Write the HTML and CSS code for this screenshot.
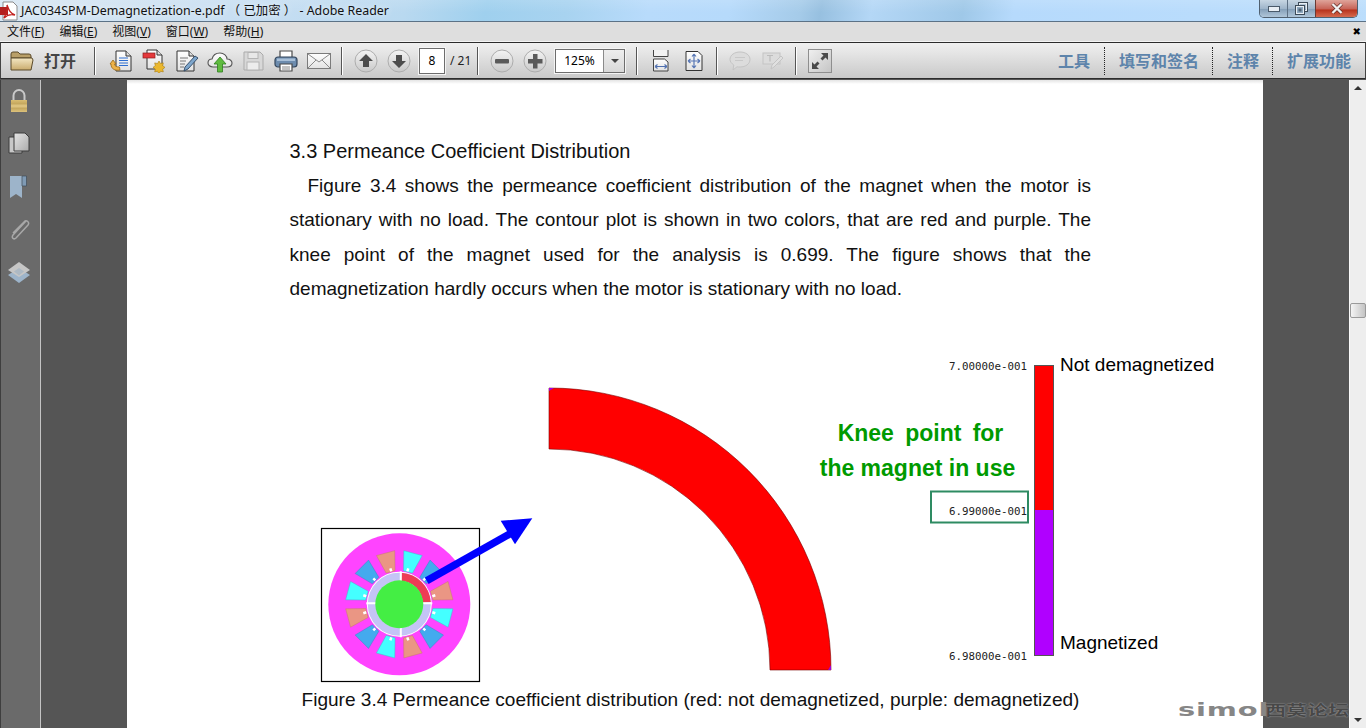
FILE: index.html
```html
<!DOCTYPE html>
<html lang="zh">
<head>
<meta charset="utf-8">
<title>Adobe Reader</title>
<link rel="stylesheet" href="styles.css">
</head>
<body>
<svg class="defs" width="0" height="0" aria-hidden="true">
  <defs>
    <linearGradient id="gBtn" x1="0" y1="0" x2="0" y2="1"><stop offset="0" stop-color="#f4f4f4"/><stop offset="1" stop-color="#c9c9c9"/></linearGradient>
    <linearGradient id="gDoc" x1="0" y1="0" x2="0" y2="1"><stop offset="0" stop-color="#ffffff"/><stop offset="1" stop-color="#e2e2e2"/></linearGradient>
    <linearGradient id="gFolder" x1="0" y1="0" x2="0" y2="1"><stop offset="0" stop-color="#f3e7c4"/><stop offset="1" stop-color="#c9ab6d"/></linearGradient>
    <linearGradient id="gBrass" x1="0" y1="0" x2="0" y2="1"><stop offset="0" stop-color="#d9bd72"/><stop offset=".3" stop-color="#c5a85f"/><stop offset=".5" stop-color="#e2c987"/><stop offset=".7" stop-color="#c5a85f"/><stop offset="1" stop-color="#dcc27c"/></linearGradient>
    <linearGradient id="gPage" x1="0" y1="0" x2="1" y2="1"><stop offset="0" stop-color="#e6e6e6"/><stop offset="1" stop-color="#ababab"/></linearGradient>
    <linearGradient id="gFull" x1="0" y1="0" x2="1" y2="1"><stop offset="0" stop-color="#f0f0f0"/><stop offset="1" stop-color="#c4c4c4"/></linearGradient>
  </defs>
</svg>

<header class="titlebar">
  <svg class="pdf-icon" width="20" height="20" viewBox="0 0 20 20">
    <path d="M3 1h10l4 4v14H3z" fill="#fff" stroke="#8a8a8a"/>
    <path d="M0 6h8v8H0z" fill="#b3201f"/>
    <path d="M7 4c2 5 3 8 8 10-4-1-8 0-11 3 2-4 4-8 3-13z" fill="none" stroke="#c2221f" stroke-width="1.4"/>
  </svg>
  <span class="title-text">JAC034SPM-Demagnetization-e.pdf （ 已加密 ） - Adobe Reader</span>
  <div class="winctrls">
    <span class="wc wc-min"><svg width="12" height="6" viewBox="0 0 12 6"><rect x=".5" y=".5" width="11" height="5" fill="#e8eef4" stroke="#4a5a6a"/></svg></span>
    <span class="wc wc-max"><svg width="13" height="13" viewBox="0 0 13 13"><rect x="3.5" y=".5" width="9" height="9" fill="none" stroke="#3c4a58"/><rect x="4.5" y="1.5" width="7" height="7" fill="none" stroke="#e8eef4"/><rect x=".5" y="3.5" width="9" height="9" fill="#8ea8bf" stroke="#3c4a58"/><rect x="1.5" y="4.5" width="7" height="7" fill="none" stroke="#e8eef4"/><rect x="3.5" y="6.5" width="3" height="3" fill="#4e6073"/></svg></span>
    <span class="wc wc-close"><svg width="12" height="11" viewBox="0 0 12 11"><path d="M1.5 1l9 9M10.500 1l-9 9" stroke="#5e2a22" stroke-width="3.600"/><path d="M1.500 1l9 9M10.500 1l-9 9" stroke="#f2f2f2" stroke-width="2.400"/></svg></span>
  </div>
</header>

<nav class="menubar">
  <span class="menu-item">文件(<u>F</u>)</span>
  <span class="menu-item">编辑(<u>E</u>)</span>
  <span class="menu-item">视图(<u>V</u>)</span>
  <span class="menu-item">窗口(<u>W</u>)</span>
  <span class="menu-item">帮助(<u>H</u>)</span>
  <span class="menu-close">✖</span>
</nav>

<div class="toolbar">
  <span class="cell cell-open">
    <svg width="24" height="22" viewBox="0 0 24 22"><path d="M1 4q0-2 2-2h5l2 2h9q2 0 2 2v2H1z" fill="#b99f68" stroke="#5b4a2a"/><path d="M1 20V8h21l1 2-2 10z" fill="url(#gFolder)" stroke="#5b4a2a"/></svg>
  </span>
  <span class="open-label">打开</span>
  <span class="sep"></span>
  <div class="cells cells-file">
    <span class="cell"><svg width="24" height="24" viewBox="0 0 24 24"><path d="M7 2h10l5 5v15H7z" fill="url(#gDoc)" stroke="#333"/><path d="M17 2v5h5" fill="#ddd" stroke="#333"/><path d="M10 9h9M10 11.500h9M10 14h9M10 16.500h9" stroke="#2f6fd0" stroke-width="1.200"/><path d="M11 21c-5 1-9-1-9-6l-1 0 3-4 3 4-1.500 0c0 2 2 3 5 3z" fill="#edb247" stroke="#9a6a16" stroke-width=".8"/></svg></span>
    <span class="cell"><svg width="24" height="24" viewBox="0 0 24 24"><path d="M5 1h10l5 5v14H5z" fill="url(#gDoc)" stroke="#333"/><path d="M15 1v5h5" fill="#ddd" stroke="#333"/><rect x="1" y="4" width="12" height="5" fill="#e4393c" stroke="#8c1c1e" stroke-width=".7"/><path d="M17 12l1.500 2.500 2.800-.6-.6 2.800 2.300 1.700-2.300 1.700.6 2.800-2.800-.6L17 24.800l-1.500-2.500-2.800.6.6-2.800-2.300-1.700 2.300-1.700-.6-2.800 2.800.6z" fill="#eab72e" stroke="#a87c12" stroke-width=".6"/></svg></span>
    <span class="cell"><svg width="24" height="24" viewBox="0 0 24 24"><path d="M2 2h12l5 5v15H2z" fill="url(#gDoc)" stroke="#333"/><path d="M14 2v5h5" fill="#ddd" stroke="#333"/><path d="M5 9h8M5 12h6M5 15h5M5 18h4" stroke="#777"/><path d="M10 18l-1 4 4-2 10-11-3-2z" fill="#7ea6cc" stroke="#2c4663" stroke-width=".9"/></svg></span>
    <span class="cell"><svg width="26" height="24" viewBox="0 0 26 24"><path d="M6 18c-3 0-5-2-5-4 0-3 2-4 4-4 1-4 4-6 8-6 4 0 7 3 7 6 3 0 5 2 5 4 0 3-2 4-5 4z" fill="url(#gDoc)" stroke="#555" stroke-width="1.100"/><path d="M13 8l6 7h-3.500v8h-5v-8H7z" fill="#5fbb3f" stroke="#2f7d1e" stroke-width=".8"/></svg></span>
    <span class="cell"><svg width="22" height="22" viewBox="0 0 22 22"><path d="M2 2h16l3 3v15H2z" fill="#d8d8d8" stroke="#ababab"/><rect x="6" y="2.500" width="10" height="6" fill="#e8e8e8" stroke="#b4b4b4"/><rect x="5" y="12" width="12" height="8" fill="#ececec" stroke="#b4b4b4"/></svg></span>
    <span class="cell"><svg width="24" height="24" viewBox="0 0 24 24"><path d="M6 9V2h12v7" fill="#fff" stroke="#4a4a4a" stroke-width="1.200"/><rect x="1" y="8" width="22" height="10" rx="3" fill="#6d8cae" stroke="#34465c" stroke-width="1.200"/><rect x="3" y="9.500" width="18" height="2.500" fill="#a9c0d8"/><path d="M6 15h12v7H6z" fill="#fff" stroke="#4a4a4a" stroke-width="1.200"/><path d="M8 18h8M8 20h8" stroke="#888"/></svg></span>
    <span class="cell"><svg width="24" height="18" viewBox="0 0 24 18"><rect x=".5" y="1.500" width="23" height="15" fill="url(#gDoc)" stroke="#7b7b7b"/><path d="M1 2l11 8 11-8M1 16l8-8M23 16l-8-8" fill="none" stroke="#8a8a8a"/></svg></span>
  </div>
  <span class="sep"></span>
  <div class="cells">
    <span class="cell"><svg width="24" height="24" viewBox="0 0 24 24"><circle cx="12" cy="12" r="11" fill="url(#gBtn)" stroke="#adadad"/><path d="M12 5l7 7h-4v6H9v-6H5z" fill="#4d4d4d"/></svg></span>
    <span class="cell"><svg width="24" height="24" viewBox="0 0 24 24"><circle cx="12" cy="12" r="11" fill="url(#gBtn)" stroke="#adadad"/><path d="M12 19l7-7h-4V6H9v6H5z" fill="#4d4d4d"/></svg></span>
  </div>
  <span class="page-input">8</span>
  <span class="page-total">/ 21</span>
  <span class="sep"></span>
  <div class="cells">
    <span class="cell"><svg width="24" height="24" viewBox="0 0 24 24"><circle cx="12" cy="12" r="11" fill="url(#gBtn)" stroke="#adadad"/><rect x="5" y="10" width="14" height="4.500" rx="1" fill="#5a5a5a"/></svg></span>
    <span class="cell"><svg width="24" height="24" viewBox="0 0 24 24"><circle cx="12" cy="12" r="11" fill="url(#gBtn)" stroke="#adadad"/><path d="M10 5h4.500v5H19.500v4.500h-5v5H10v-5H5V10h5z" fill="#5a5a5a"/></svg></span>
  </div>
  <div class="zoom-box">
    <span class="zoom-value">125%</span>
    <span class="zoom-drop"></span>
  </div>
  <span class="sep"></span>
  <div class="cells">
    <span class="cell"><svg width="18" height="22" viewBox="0 0 18 22"><path d="M1.500 0v6.500h14.500V0" fill="#f2f2f2" stroke="#444"/><path d="M1.500 9h11l3.500 3v9H1.500z" fill="url(#gDoc)" stroke="#444"/><path d="M3 16.500h12M3 16.500l2.500-2M3 16.500l2.500 2M15 16.500l-2.500-2M15 16.500l-2.500 2" stroke="#5070b0" fill="none" stroke-width="1.100"/></svg></span>
    <span class="cell"><svg width="18" height="20" viewBox="0 0 18 20"><path d="M1 .5h12l4 4v15H1z" fill="url(#gDoc)" stroke="#333"/><path d="M9 3v14M3 10h12M9 3l-2 2.500M9 3l2 2.500M9 17l-2-2.500M9 17l2-2.500M3 10l2.500-2M3 10l2.500 2M15 10l-2.500-2M15 10l-2.500 2" stroke="#5877b5" fill="none" stroke-width="1.200"/></svg></span>
  </div>
  <span class="sep"></span>
  <div class="cells cells-comment">
    <span class="cell"><svg width="22" height="20" viewBox="0 0 22 20"><path d="M11 1c5.500 0 10 3 10 7.500S16.500 16 11 16c-1 0-2 0-3-.2L4 19l.8-5C2.500 12.500 1 10.500 1 8.500 1 4 5.500 1 11 1z" fill="#dcdcdc" stroke="#c4c4c4"/><path d="M6 6.500h10M6 9.500h8" stroke="#c8c8c8"/></svg></span>
    <span class="cell"><svg width="22" height="20" viewBox="0 0 22 20"><rect x="1" y="2" width="17" height="11" fill="#dcdcdc" stroke="#c4c4c4"/><path d="M5 4.500h6M8 4.500v6" stroke="#bcbcbc" stroke-width="1.200"/><path d="M9 18l1-4 9-9 2 2-9 9z" fill="#e0e0e0" stroke="#c4c4c4"/></svg></span>
  </div>
  <span class="sep"></span>
  <span class="cell"><svg width="24" height="24" viewBox="0 0 24 24"><rect x=".5" y=".5" width="23" height="23" fill="url(#gFull)" stroke="#8e8e8e"/><path d="M13 4h7v7l-2.500-2.500-3 3-2-2 3-3zM11 20H4v-7l2.500 2.500 3-3 2 2-3 3z" fill="#4a4a4a"/></svg></span>
  <div class="panes">
    <span class="pane pane-first">工具</span>
    <span class="pane pane-div">填写和签名</span>
    <span class="pane pane-div">注释</span>
    <span class="pane pane-div pane-last">扩展功能</span>
  </div>
</div>

<main class="workspace">
  <aside class="sidebar">
    <svg class="side-icon" width="20" height="24" viewBox="0 0 20 24"><path d="M4.500 11V6.500a5.500 5.500 0 0 1 11 0V11" fill="none" stroke="#c9c9c9" stroke-width="2"/><rect x="2" y="11" width="16" height="12" fill="url(#gBrass)"/></svg>
    <svg class="side-icon" width="22" height="24" viewBox="0 0 22 24"><path d="M1 5h13v16H1z" fill="#c8c8c8" stroke="#3c3c3c"/><path d="M6 1h11l4 4v14H6z" fill="url(#gPage)" stroke="#3c3c3c"/></svg>
    <svg class="side-icon" width="20" height="24" viewBox="0 0 20 24"><path d="M1 1h12v22l-6-4-6 4z" fill="#9db4ca"/><path d="M13 1h4.500v10H13z" fill="#7f9ab4" stroke="#3f4c58" stroke-width=".7"/></svg>
    <svg class="side-icon" width="22" height="24" viewBox="0 0 22 24"><path d="M18 3L5 17c-2 3 1 5 3 3L20 7c2-3-2-6-4-3L5 15" fill="none" stroke="#a8a8a8" stroke-width="1.500"/></svg>
    <svg class="side-icon" width="24" height="24" viewBox="0 0 24 24"><path d="M1 14l11-7 11 7-11 8z" fill="#9db4ca"/><path d="M1 9l11-8 11 8-11 7z" fill="#c6c6c6"/><path d="M7 10.500l5-3.500 5 3.500-5 4z" fill="#adb9c4"/></svg>
  </aside>

  <div class="viewer">
    <article class="page">
      <h1 class="heading">3.3 Permeance Coefficient Distribution</h1>
      <p class="body-text">Figure 3.4 shows the permeance coefficient distribution of the magnet when the motor is stationary with no load. The contour plot is shown in two colors, that are red and purple. The knee point of the magnet used for the analysis is 0.699. The figure shows that the demagnetization hardly occurs when the motor is stationary with no load.</p>
      <figure class="figure">
        <svg class="plot" width="1136" height="382" viewBox="127 306 1136 382">
          <path d="M549 388A282 282 0 0 1 831 670H770A221 221 0 0 0 549 449z" fill="#ff0000" stroke="#7a0000" stroke-width=".6"/>
          <path d="M549 388h5l-5 3zM831 670v-5l-3 5z" fill="#a000e0"/>

          <rect x="321.500" y="528.500" width="158" height="153" fill="#fff" stroke="#000" stroke-width="1.200"/>
          <g transform="translate(399.300 604.300)">
            <circle r="71" fill="#ff44ff"/>
            <polygon class="slot-s" points="-9.500,-53 9.500,-53 4.600,-33.500 -4.600,-33.500" transform="rotate(-15)"/>
            <polygon class="slot-c" points="-9.500,-53 9.500,-53 4.600,-33.500 -4.600,-33.500" transform="rotate(15)"/>
            <polygon class="slot-b" points="-9.500,-53 9.500,-53 4.600,-33.500 -4.600,-33.500" transform="rotate(45)"/>
            <polygon class="slot-s" points="-9.500,-53 9.500,-53 4.600,-33.500 -4.600,-33.500" transform="rotate(75)"/>
            <polygon class="slot-c" points="-9.500,-53 9.500,-53 4.600,-33.500 -4.600,-33.500" transform="rotate(105)"/>
            <polygon class="slot-b" points="-9.500,-53 9.500,-53 4.600,-33.500 -4.600,-33.500" transform="rotate(135)"/>
            <polygon class="slot-s" points="-9.500,-53 9.500,-53 4.600,-33.500 -4.600,-33.500" transform="rotate(165)"/>
            <polygon class="slot-c" points="-9.500,-53 9.500,-53 4.600,-33.500 -4.600,-33.500" transform="rotate(195)"/>
            <polygon class="slot-b" points="-9.500,-53 9.500,-53 4.600,-33.500 -4.600,-33.500" transform="rotate(225)"/>
            <polygon class="slot-s" points="-9.500,-53 9.500,-53 4.600,-33.500 -4.600,-33.500" transform="rotate(255)"/>
            <polygon class="slot-c" points="-9.500,-53 9.500,-53 4.600,-33.500 -4.600,-33.500" transform="rotate(285)"/>
            <polygon class="slot-b" points="-9.500,-53 9.500,-53 4.600,-33.500 -4.600,-33.500" transform="rotate(315)"/>
            <circle r="32.500" fill="#fff"/>
            <circle r="27.500" fill="none" stroke="#c4c4f6" stroke-width="8"/>
            <path d="M2 -27.500A27.500 27.500 0 0 1 27.500 -2" fill="none" stroke="#ee3c55" stroke-width="8"/>
            <path d="M1.500-33v10M1.500 23v10M-33-1h10M23-1h10" stroke="#fff" stroke-width="2"/>
            <path d="M-8-33l-1-3M8-33l1-3M-33-8l-3-1M33-8l3-1M-33 8l-3 1M33 8l3 1M-8 33l-1 3M8 33l1 3M-24-24l-2-2M24-24l2-2M-24 24l-2 2M24 24l2 2" stroke="#fff" stroke-width="2.500"/>
            <circle r="24" fill="#44ee44"/>
          </g>

          <path d="M426.700 580.700L513 532" stroke="#0000ff" stroke-width="7.500"/>
          <polygon points="500.700,520.700 532.300,518.300 515,544.300" fill="#0000ff"/>

          <text class="scale-label" x="1027" y="370" text-anchor="end">7.00000e-001</text>
          <text class="scale-label" x="1027" y="515" text-anchor="end">6.99000e-001</text>
          <text class="scale-label" x="1027" y="660" text-anchor="end">6.98000e-001</text>
          <rect x="931" y="491.500" width="97" height="31" fill="none" stroke="#2e8b62" stroke-width="2"/>
          <rect x="1034.500" y="365.500" width="19" height="290" fill="#b000ff" stroke="#555"/>
          <rect x="1035" y="366" width="18" height="144" fill="#ff0000"/>
          <text class="legend" x="1060" y="371">Not demagnetized</text>
          <text class="legend" x="1060" y="649">Magnetized</text>
          <text class="knee knee-top" x="920.500" y="441" text-anchor="middle" xml:space="preserve">Knee  point  for</text>
          <text class="knee" x="917.500" y="476" text-anchor="middle">the magnet in use</text>
        </svg>
      </figure>
      <p class="caption">Figure 3.4 Permeance coefficient distribution (red: not demagnetized, purple: demagnetized)</p>
    </article>
  </div>

  <div class="scrollbar">
    <span class="arrow-up"></span>
    <span class="thumb"></span>
    <span class="arrow-down"></span>
  </div>

  <div class="watermark"><span class="wm-latin">simol</span><span class="wm-cjk">西莫论坛</span></div>
</main>
</body>
</html>
```

FILE: styles.css
```css
* { box-sizing: border-box; }
html, body { margin: 0; padding: 0; }
body {
  width: 1366px;
  height: 728px;
  overflow: hidden;
  display: flex;
  flex-direction: column;
  font-family: "Noto Sans", "Noto Sans CJK SC", sans-serif;
  background: #555;
}
.defs { position: absolute; }

.titlebar {
  height: 22px;
  flex: none;
  display: flex;
  align-items: flex-start;
  border-bottom: 1px solid #5c7286;
  background:
    linear-gradient(180deg, rgba(255,255,255,.12), rgba(255,255,255,0) 60%),
    linear-gradient(100deg, #d8e6f2 0, #c6def2 260px, #b9d9f0 400px, #9fd0ee 480px, #a8d3f0 560px, #b8dbfb 640px, #b6dafb 720px, #a5cbe9 790px, #97c0e0 810px, #b4d7f6 860px, #9fc8e8 950px, #b6dafc 1000px, #bcdefc 1366px);
}
.pdf-icon { flex: none; margin-top: 1px; }
.title-text {
  margin-left: 1px;
  font-size: 12.400px;
  line-height: 21px;
  color: #111;
  white-space: nowrap;
  text-shadow: 0 0 6px rgba(255,255,255,.9);
}
.winctrls {
  margin-left: auto;
  margin-right: 8px;
  display: flex;
  height: 18px;
  border: 1px solid #50606f;
  border-top: 0;
  border-radius: 0 0 5px 5px;
  overflow: hidden;
}
.wc { display: flex; align-items: center; justify-content: center; height: 100%; }
.wc-min { width: 28px; background: linear-gradient(180deg, #c7d6e3, #9fb5ca 50%, #86a0b9 55%, #b0c6d9); border-right: 1px solid #5d7084; }
.wc-max { width: 27px; background: linear-gradient(180deg, #c7d6e3, #9fb5ca 50%, #86a0b9 55%, #b0c6d9); }
.wc-close { width: 42px; background: linear-gradient(180deg, #dfa49a, #c8665a 50%, #b8351f 60%, #d66a4e); border-left: 1px solid #6a3a34; }

.menubar {
  height: 20px;
  flex: none;
  display: flex;
  align-items: center;
  padding-left: 7px;
  gap: 15px;
  background: #dedede;
  border-bottom: 1px solid #f4f4f4;
}
.menu-item { font-size: 12px; line-height: 18px; color: #111; white-space: nowrap; }
.menu-close { margin-left: auto; margin-right: 5px; font-size: 10px; line-height: 18px; color: #000; font-family: "DejaVu Sans", sans-serif; }

.toolbar {
  height: 37px;
  flex: none;
  display: flex;
  align-items: center;
  background: linear-gradient(180deg, #f0f0f0, #c9c9c9);
  border-top: 1px solid #2c2c2c;
  border-bottom: 1px solid #2c2c2c;
  border-left: 1px solid #444;
  border-right: 1px solid #444;
  margin-bottom: 1px;
}
.cell { width: 33px; height: 30px; flex: none; display: flex; align-items: center; justify-content: center; }
.cell-open { width: 41px; }
.cells { display: flex; flex: none; }
.cells-file { margin-left: 2px; }
.cells-comment { margin-left: -1px; }
.open-label { width: 32px; margin-left: 2px; margin-right: 12px; font-size: 16px; font-weight: 700; line-height: 20px; color: #444; flex: none; white-space: nowrap; }
.sep { width: 2px; height: 28px; flex: none; margin: 0 6px; background: linear-gradient(90deg, #555 50%, #fff 50%); }
.page-input {
  width: 26px;
  height: 26px;
  margin-left: 4px;
  flex: none;
  background: #fff;
  border: 1px solid #6d6d6d;
  outline: 1px solid #f4f4f4;
  font-size: 12px;
  line-height: 24px;
  text-align: center;
  color: #000;
}
.page-total { width: 21px; margin-left: 5px; flex: none; font-size: 12px; color: #222; white-space: nowrap; }
.zoom-box {
  width: 70px;
  height: 24px;
  margin-left: 4px;
  margin-right: 5px;
  flex: none;
  display: flex;
  background: #fff;
  border: 1px solid #6d6d6d;
  outline: 1px solid #f4f4f4;
}
.zoom-value { width: 47px; font-size: 12px; line-height: 22px; text-align: center; color: #000; }
.zoom-drop { flex: 1; position: relative; border-left: 1px solid #8a8a8a; background: linear-gradient(180deg, #eee, #d8d8d8); }
.zoom-drop::after { content: ""; position: absolute; left: 7px; top: 9px; border: 4px solid transparent; border-top: 4px solid #444; border-bottom: 0; }
.panes { margin-left: auto; display: flex; align-items: center; height: 28px; }
.pane { padding: 0 13px 0 14px; font-size: 16px; font-weight: 700; line-height: 28px; color: #5d84ab; white-space: nowrap; }
.pane-first { padding-right: 14px; }
.pane-last { padding-right: 14px; }
.pane-div { border-left: 1px dotted #222; }

.workspace { flex: 1; min-height: 0; display: flex; position: relative; }
.sidebar {
  width: 41px;
  flex: none;
  display: flex;
  flex-direction: column;
  align-items: center;
  padding: 9px 3px 0 0;
  gap: 19px;
  background: #6a6a6a;
  border-left: 1px solid #3e3e3e;
  border-right: 1px solid #c4c4c4;
}
.side-icon { flex: none; }
.viewer {
  flex: 1;
  min-width: 0;
  padding: 0 86px;
  background: #555;
  overflow: hidden;
}
.page {
  height: 100%;
  padding-top: 54px;
  background: linear-gradient(180deg, #e4e4e4 0, #fff 4px);
  font-family: "Liberation Sans", Arial, sans-serif;
  color: #111;
}
.heading {
  margin: 0 0 0 162.500px;
  font-size: 20px;
  font-weight: 400;
  line-height: 34px;
}
.body-text {
  width: 801.500px;
  margin: .5px 0 -.5px 162.500px;
  font-size: 19px;
  line-height: 34.500px;
  text-align: justify;
  text-indent: 18px;
}
.figure { margin: 0; height: 382px; }
.plot { display: block; }
.slot-s { fill: #ea9684; stroke: #c07868; stroke-width: .4; }
.slot-c { fill: #44ffff; stroke: #30c0c0; stroke-width: .4; }
.slot-b { fill: #44aaee; stroke: #3080c0; stroke-width: .4; }
.scale-label { font-family: "DejaVu Sans Mono", monospace; font-size: 10.800px; fill: #222; }
.legend { font-family: "Liberation Sans", Arial, sans-serif; font-size: 19px; fill: #000; }
.knee { font-family: "Liberation Sans", Arial, sans-serif; font-size: 23px; font-weight: 700; fill: #009a00; white-space: pre; }
.knee-top { word-spacing: -.75px; }
.caption {
  width: 801px;
  margin: 0 0 0 163px;
  font-size: 19.060px;
  line-height: 24px;
  text-align: center;
  color: #111;
}

.scrollbar {
  width: 17px;
  flex: none;
  position: relative;
  background: #eeeeee;
  border-left: 1px solid #fafafa;
}
.arrow-up { position: absolute; left: 4px; top: 6px; border: 4px solid transparent; border-bottom: 4px solid #333; border-top: 0; }
.arrow-down { position: absolute; left: 4px; bottom: 6px; border: 4px solid transparent; border-top: 4px solid #333; border-bottom: 0; }
.thumb { position: absolute; left: 0; top: 223px; width: 16px; height: 15px; background: linear-gradient(90deg, #f4f4f4, #c4c4c4); border: 1px solid #9a9a9a; border-radius: 2px; }

.watermark {
  position: absolute;
  left: 1178px;
  bottom: 8px;
  display: flex;
  align-items: center;
  height: 20px;
}
.wm-latin {
  width: 87px;
  flex: none;
  font-family: "DejaVu Sans", sans-serif;
  font-size: 17px;
  font-weight: 700;
  line-height: 20px;
  letter-spacing: .5px;
  color: #868686;
  white-space: nowrap;
  transform: scaleX(1.700);
  transform-origin: left center;
}
.wm-cjk {
  font-size: 21px;
  line-height: 20px;
  color: #484848;
  font-weight: 700;
  text-shadow: 0 0 2px #bbb;
  white-space: nowrap;
  transform: scaleY(.650);
}
```
